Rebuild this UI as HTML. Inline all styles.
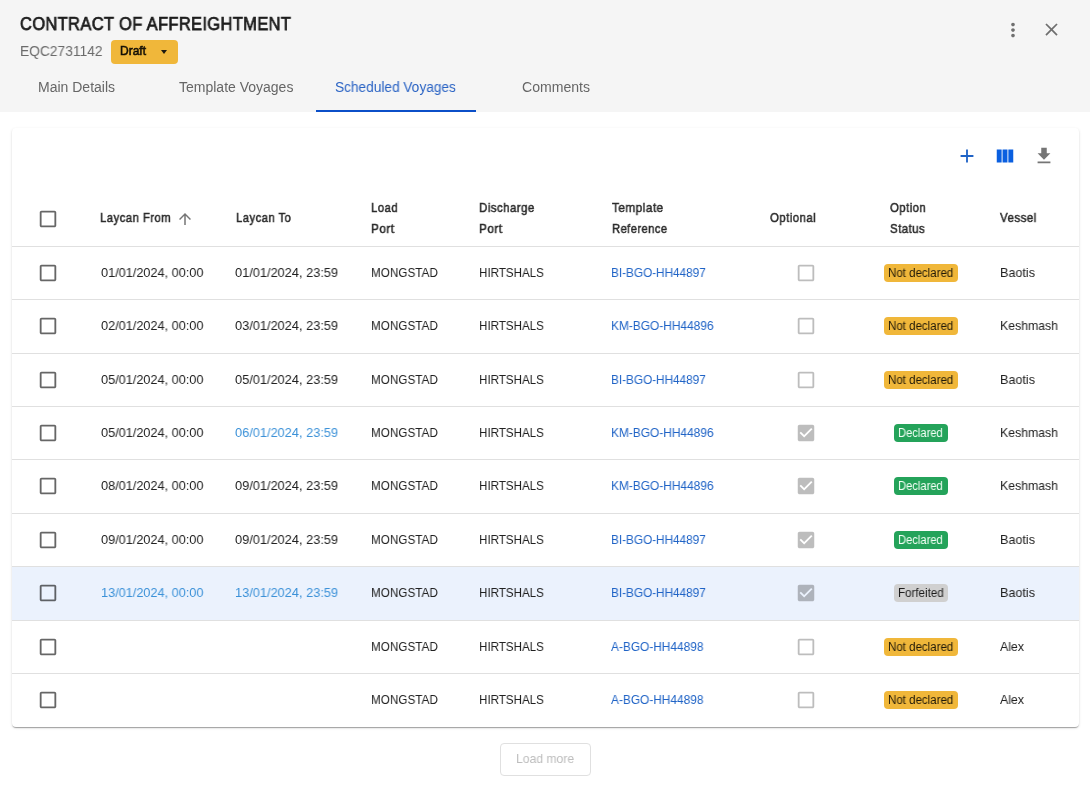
<!DOCTYPE html>
<html><head><meta charset="utf-8"><style>
html,body{margin:0;padding:0;}
body{width:1090px;height:785px;overflow:hidden;background:#fff;position:relative;font-family:"Liberation Sans",sans-serif;}
.t{position:absolute;white-space:nowrap;line-height:20px;transform-origin:0 0;will-change:transform;}
.i{position:absolute;}
.b{position:absolute;}
</style></head><body>
<div class="b" style="left:0;top:0;width:1090px;height:112px;background:#f5f5f5"></div>
<div class="t" style="left:20.48px;top:14.00px;font-size:18px;color:#1c1c1c;-webkit-text-stroke:0.75px #1c1c1c;transform:scaleX(0.9145);letter-spacing:0.4px;">CONTRACT OF AFFREIGHTMENT</div>
<div class="t" style="left:20.10px;top:41.05px;font-size:14px;color:#6b6b6b;transform:scaleX(0.9843);">EQC2731142</div>
<div class="b" style="left:111px;top:40px;width:67px;height:24px;background:#f0b73a;border-radius:4px"></div>
<div class="t" style="left:119.50px;top:40.64px;font-size:12px;color:rgba(0,0,0,0.87);-webkit-text-stroke:0.6px rgba(0,0,0,0.87);transform:scaleX(0.9962);">Draft</div>
<svg class="i" style="left:160px;top:49.4px" width="8" height="6" viewBox="0 0 8 6"><path d="M1 1h6L4 5z" fill="#1d1a10"/></svg>
<svg class="i" style="left:1002px;top:19px" width="22" height="22" viewBox="0 0 24 24"><path fill="#6f6f6f" d="M12 8c1.1 0 2-.9 2-2s-.9-2-2-2-2 .9-2 2 .9 2 2 2m0 2c-1.1 0-2 .9-2 2s.9 2 2 2 2-.9 2-2-.9-2-2-2m0 6c-1.1 0-2 .9-2 2s.9 2 2 2 2-.9 2-2-.9-2-2-2"/></svg>
<svg class="i" style="left:1041px;top:19px" width="21" height="21" viewBox="0 0 24 24"><path fill="#6f6f6f" d="M19 6.41 17.59 5 12 10.59 6.41 5 5 6.41 10.59 12 5 17.59 6.41 19 12 13.41 17.59 19 19 17.59 13.41 12z"/></svg>
<div class="t" style="left:37.50px;top:76.95px;font-size:14px;color:#666666;transform:scaleX(0.9987);">Main Details</div>
<div class="t" style="left:178.80px;top:76.95px;font-size:14px;color:#666666;transform:scaleX(0.9962);">Template Voyages</div>
<div class="t" style="left:335.20px;top:76.95px;font-size:14px;color:#2a63c4;transform:scaleX(0.9762);">Scheduled Voyages</div>
<div class="t" style="left:521.70px;top:77.05px;font-size:14px;color:#666666;transform:scaleX(1.0046);">Comments</div>
<div class="b" style="left:316px;top:110px;width:160px;height:2px;background:#0b4fc8"></div>
<div class="b" style="left:12px;top:128px;width:1067px;height:599px;background:#fff;border-radius:4px;box-shadow:0 2px 1px -1px rgba(0,0,0,.2),0 1px 1px 0 rgba(0,0,0,.14),0 1px 3px 0 rgba(0,0,0,.12)"></div>
<div class="b" style="left:12px;top:128px;width:1067px;height:599px;border-radius:4px;overflow:hidden">
<div class="b" style="left:0;top:118px;width:1067px;height:52px;border-top:1px solid #e0e0e0;"></div>
<div class="b" style="left:0;top:171px;width:1067px;height:53px;border-top:1px solid #e0e0e0;"></div>
<div class="b" style="left:0;top:225px;width:1067px;height:52px;border-top:1px solid #e0e0e0;"></div>
<div class="b" style="left:0;top:278px;width:1067px;height:52px;border-top:1px solid #e0e0e0;"></div>
<div class="b" style="left:0;top:331px;width:1067px;height:53px;border-top:1px solid #e0e0e0;"></div>
<div class="b" style="left:0;top:385px;width:1067px;height:52px;border-top:1px solid #e0e0e0;"></div>
<div class="b" style="left:0;top:438px;width:1067px;height:53px;border-top:1px solid #e0e0e0;background:#ebf2fd;"></div>
<div class="b" style="left:0;top:492px;width:1067px;height:52px;border-top:1px solid #e0e0e0;"></div>
<div class="b" style="left:0;top:545px;width:1067px;height:52px;border-top:1px solid #e0e0e0;"></div>
</div>
<svg class="i" style="left:956px;top:145px" width="22" height="22" viewBox="0 0 24 24"><path fill="#1f63c6" d="M19 13h-6v6h-2v-6H5v-2h6V5h2v6h6v2z"/></svg>
<svg class="i" style="left:994px;top:145px" width="22" height="22" viewBox="0 0 24 24"><path fill="#0a5fe0" d="M14.67 5v14H9.33V5zm1 14H21V5h-5.33zm-7.34 0V5H3v14z"/></svg>
<svg class="i" style="left:1033px;top:145px" width="22" height="22" viewBox="0 0 24 24"><path fill="#757575" d="M19 9h-4V3H9v6H5l7 7 7-7zM5 18v2h14v-2H5z"/></svg>
<svg class="i" style="left:36.90px;top:208.00px" width="22" height="22" viewBox="0 0 24 24"><path fill="rgba(0,0,0,0.6)" d="M19 5v14H5V5h14m0-2H5c-1.11 0-2 .9-2 2v14c0 1.1.89 2 2 2h14c1.1 0 2-.9 2-2V5c0-1.1-.9-2-2-2z"/></svg>
<div class="t" style="left:100.45px;top:208.10px;font-size:13px;color:#2b2b2b;-webkit-text-stroke:0.5px #2b2b2b;transform:scaleX(0.8742);letter-spacing:0.5px;">Laycan From</div>
<svg class="i" style="left:175.7px;top:210px" width="18" height="18" viewBox="0 0 24 24"><path fill="#757575" d="M4 12l1.41 1.41L11 7.83V20h2V7.83l5.58 5.59L20 12l-8-8-8 8z"/></svg>
<div class="t" style="left:235.85px;top:207.80px;font-size:13px;color:#2b2b2b;-webkit-text-stroke:0.5px #2b2b2b;transform:scaleX(0.8706);letter-spacing:0.5px;">Laycan To</div>
<div class="t" style="left:371.35px;top:197.60px;font-size:13px;color:#2b2b2b;-webkit-text-stroke:0.5px #2b2b2b;transform:scaleX(0.8739);letter-spacing:0.5px;">Load</div>
<div class="t" style="left:371.35px;top:218.60px;font-size:13px;color:#2b2b2b;-webkit-text-stroke:0.5px #2b2b2b;transform:scaleX(0.9047);letter-spacing:0.5px;">Port</div>
<div class="t" style="left:479.35px;top:197.60px;font-size:13px;color:#2b2b2b;-webkit-text-stroke:0.5px #2b2b2b;transform:scaleX(0.8848);letter-spacing:0.5px;">Discharge</div>
<div class="t" style="left:479.35px;top:218.60px;font-size:13px;color:#2b2b2b;-webkit-text-stroke:0.5px #2b2b2b;transform:scaleX(0.9047);letter-spacing:0.5px;">Port</div>
<div class="t" style="left:611.85px;top:197.60px;font-size:13px;color:#2b2b2b;-webkit-text-stroke:0.5px #2b2b2b;transform:scaleX(0.9084);letter-spacing:0.5px;">Template</div>
<div class="t" style="left:611.85px;top:218.60px;font-size:13px;color:#2b2b2b;-webkit-text-stroke:0.5px #2b2b2b;transform:scaleX(0.8609);letter-spacing:0.5px;">Reference</div>
<div class="t" style="left:769.75px;top:208.10px;font-size:13px;color:#2b2b2b;-webkit-text-stroke:0.5px #2b2b2b;transform:scaleX(0.8818);letter-spacing:0.5px;">Optional</div>
<div class="t" style="left:889.95px;top:197.60px;font-size:13px;color:#2b2b2b;-webkit-text-stroke:0.5px #2b2b2b;transform:scaleX(0.8772);letter-spacing:0.5px;">Option</div>
<div class="t" style="left:890.35px;top:218.60px;font-size:13px;color:#2b2b2b;-webkit-text-stroke:0.5px #2b2b2b;transform:scaleX(0.8838);letter-spacing:0.5px;">Status</div>
<div class="t" style="left:999.75px;top:208.10px;font-size:13px;color:#2b2b2b;-webkit-text-stroke:0.5px #2b2b2b;transform:scaleX(0.8870);letter-spacing:0.5px;">Vessel</div>
<svg class="i" style="left:37.20px;top:262.10px" width="22" height="22" viewBox="0 0 24 24"><path fill="rgba(0,0,0,0.6)" d="M19 5v14H5V5h14m0-2H5c-1.11 0-2 .9-2 2v14c0 1.1.89 2 2 2h14c1.1 0 2-.9 2-2V5c0-1.1-.9-2-2-2z"/></svg>
<div class="t" style="left:100.50px;top:262.50px;font-size:13px;color:#212121;transform:scaleX(0.9779);">01/01/2024, 00:00</div>
<div class="t" style="left:235.20px;top:262.50px;font-size:13px;color:#212121;transform:scaleX(0.9837);">01/01/2024, 23:59</div>
<div class="t" style="left:371.10px;top:262.50px;font-size:13px;color:#212121;transform:scaleX(0.9025);">MONGSTAD</div>
<div class="t" style="left:479.10px;top:262.50px;font-size:13px;color:#212121;transform:scaleX(0.8921);">HIRTSHALS</div>
<div class="t" style="left:611.30px;top:262.50px;font-size:13px;color:#1f63c6;transform:scaleX(0.9050);">BI-BGO-HH44897</div>
<svg class="i" style="left:795.00px;top:262.10px" width="22" height="22" viewBox="0 0 24 24"><path fill="rgba(0,0,0,0.26)" d="M19 5v14H5V5h14m0-2H5c-1.11 0-2 .9-2 2v14c0 1.1.89 2 2 2h14c1.1 0 2-.9 2-2V5c0-1.1-.9-2-2-2z"/></svg>
<div class="b" style="left:884.4px;top:264.10px;width:73.5px;height:17.5px;background:#f0b73a;border-radius:4px"></div>
<div class="t" style="left:888.10px;top:262.64px;font-size:12px;color:rgba(0,0,0,0.87);transform:scaleX(0.9594);">Not declared</div>
<div class="t" style="left:999.50px;top:262.50px;font-size:13px;color:#212121;transform:scaleX(0.9661);">Baotis</div>
<svg class="i" style="left:37.20px;top:315.10px" width="22" height="22" viewBox="0 0 24 24"><path fill="rgba(0,0,0,0.6)" d="M19 5v14H5V5h14m0-2H5c-1.11 0-2 .9-2 2v14c0 1.1.89 2 2 2h14c1.1 0 2-.9 2-2V5c0-1.1-.9-2-2-2z"/></svg>
<div class="t" style="left:100.50px;top:315.50px;font-size:13px;color:#212121;transform:scaleX(0.9779);">02/01/2024, 00:00</div>
<div class="t" style="left:235.20px;top:315.50px;font-size:13px;color:#212121;transform:scaleX(0.9837);">03/01/2024, 23:59</div>
<div class="t" style="left:371.10px;top:315.50px;font-size:13px;color:#212121;transform:scaleX(0.9025);">MONGSTAD</div>
<div class="t" style="left:479.10px;top:315.50px;font-size:13px;color:#212121;transform:scaleX(0.8921);">HIRTSHALS</div>
<div class="t" style="left:611.30px;top:315.50px;font-size:13px;color:#1f63c6;transform:scaleX(0.9161);">KM-BGO-HH44896</div>
<svg class="i" style="left:795.00px;top:315.10px" width="22" height="22" viewBox="0 0 24 24"><path fill="rgba(0,0,0,0.26)" d="M19 5v14H5V5h14m0-2H5c-1.11 0-2 .9-2 2v14c0 1.1.89 2 2 2h14c1.1 0 2-.9 2-2V5c0-1.1-.9-2-2-2z"/></svg>
<div class="b" style="left:884.4px;top:317.10px;width:73.5px;height:17.5px;background:#f0b73a;border-radius:4px"></div>
<div class="t" style="left:888.10px;top:315.64px;font-size:12px;color:rgba(0,0,0,0.87);transform:scaleX(0.9594);">Not declared</div>
<div class="t" style="left:999.50px;top:315.50px;font-size:13px;color:#212121;transform:scaleX(0.9424);">Keshmash</div>
<svg class="i" style="left:37.20px;top:369.10px" width="22" height="22" viewBox="0 0 24 24"><path fill="rgba(0,0,0,0.6)" d="M19 5v14H5V5h14m0-2H5c-1.11 0-2 .9-2 2v14c0 1.1.89 2 2 2h14c1.1 0 2-.9 2-2V5c0-1.1-.9-2-2-2z"/></svg>
<div class="t" style="left:100.50px;top:369.50px;font-size:13px;color:#212121;transform:scaleX(0.9779);">05/01/2024, 00:00</div>
<div class="t" style="left:235.20px;top:369.50px;font-size:13px;color:#212121;transform:scaleX(0.9837);">05/01/2024, 23:59</div>
<div class="t" style="left:371.10px;top:369.50px;font-size:13px;color:#212121;transform:scaleX(0.9025);">MONGSTAD</div>
<div class="t" style="left:479.10px;top:369.50px;font-size:13px;color:#212121;transform:scaleX(0.8921);">HIRTSHALS</div>
<div class="t" style="left:611.30px;top:369.50px;font-size:13px;color:#1f63c6;transform:scaleX(0.9050);">BI-BGO-HH44897</div>
<svg class="i" style="left:795.00px;top:369.10px" width="22" height="22" viewBox="0 0 24 24"><path fill="rgba(0,0,0,0.26)" d="M19 5v14H5V5h14m0-2H5c-1.11 0-2 .9-2 2v14c0 1.1.89 2 2 2h14c1.1 0 2-.9 2-2V5c0-1.1-.9-2-2-2z"/></svg>
<div class="b" style="left:884.4px;top:371.10px;width:73.5px;height:17.5px;background:#f0b73a;border-radius:4px"></div>
<div class="t" style="left:888.10px;top:369.64px;font-size:12px;color:rgba(0,0,0,0.87);transform:scaleX(0.9594);">Not declared</div>
<div class="t" style="left:999.50px;top:369.50px;font-size:13px;color:#212121;transform:scaleX(0.9661);">Baotis</div>
<svg class="i" style="left:37.20px;top:422.10px" width="22" height="22" viewBox="0 0 24 24"><path fill="rgba(0,0,0,0.6)" d="M19 5v14H5V5h14m0-2H5c-1.11 0-2 .9-2 2v14c0 1.1.89 2 2 2h14c1.1 0 2-.9 2-2V5c0-1.1-.9-2-2-2z"/></svg>
<div class="t" style="left:100.50px;top:422.50px;font-size:13px;color:#212121;transform:scaleX(0.9779);">05/01/2024, 00:00</div>
<div class="t" style="left:235.20px;top:422.50px;font-size:13px;color:#3b91d8;transform:scaleX(0.9837);">06/01/2024, 23:59</div>
<div class="t" style="left:371.10px;top:422.50px;font-size:13px;color:#212121;transform:scaleX(0.9025);">MONGSTAD</div>
<div class="t" style="left:479.10px;top:422.50px;font-size:13px;color:#212121;transform:scaleX(0.8921);">HIRTSHALS</div>
<div class="t" style="left:611.30px;top:422.50px;font-size:13px;color:#1f63c6;transform:scaleX(0.9161);">KM-BGO-HH44896</div>
<svg class="i" style="left:795.00px;top:422.10px" width="22" height="22" viewBox="0 0 24 24"><path fill="rgba(0,0,0,0.26)" d="M19 3H5c-1.11 0-2 .9-2 2v14c0 1.1.89 2 2 2h14c1.1 0 2-.9 2-2V5c0-1.1-.9-2-2-2zm-9 14l-5-5 1.41-1.41L10 14.17l7.59-7.59L19 8l-9 9z"/></svg>
<div class="b" style="left:894px;top:424.10px;width:54px;height:17.6px;background:#24a35a;border-radius:4px"></div>
<div class="t" style="left:898.40px;top:422.64px;font-size:12px;color:#f4fff6;transform:scaleX(0.9313);">Declared</div>
<div class="t" style="left:999.50px;top:422.50px;font-size:13px;color:#212121;transform:scaleX(0.9424);">Keshmash</div>
<svg class="i" style="left:37.20px;top:475.10px" width="22" height="22" viewBox="0 0 24 24"><path fill="rgba(0,0,0,0.6)" d="M19 5v14H5V5h14m0-2H5c-1.11 0-2 .9-2 2v14c0 1.1.89 2 2 2h14c1.1 0 2-.9 2-2V5c0-1.1-.9-2-2-2z"/></svg>
<div class="t" style="left:100.50px;top:475.50px;font-size:13px;color:#212121;transform:scaleX(0.9779);">08/01/2024, 00:00</div>
<div class="t" style="left:235.20px;top:475.50px;font-size:13px;color:#212121;transform:scaleX(0.9837);">09/01/2024, 23:59</div>
<div class="t" style="left:371.10px;top:475.50px;font-size:13px;color:#212121;transform:scaleX(0.9025);">MONGSTAD</div>
<div class="t" style="left:479.10px;top:475.50px;font-size:13px;color:#212121;transform:scaleX(0.8921);">HIRTSHALS</div>
<div class="t" style="left:611.30px;top:475.50px;font-size:13px;color:#1f63c6;transform:scaleX(0.9161);">KM-BGO-HH44896</div>
<svg class="i" style="left:795.00px;top:475.10px" width="22" height="22" viewBox="0 0 24 24"><path fill="rgba(0,0,0,0.26)" d="M19 3H5c-1.11 0-2 .9-2 2v14c0 1.1.89 2 2 2h14c1.1 0 2-.9 2-2V5c0-1.1-.9-2-2-2zm-9 14l-5-5 1.41-1.41L10 14.17l7.59-7.59L19 8l-9 9z"/></svg>
<div class="b" style="left:894px;top:477.10px;width:54px;height:17.6px;background:#24a35a;border-radius:4px"></div>
<div class="t" style="left:898.40px;top:475.64px;font-size:12px;color:#f4fff6;transform:scaleX(0.9313);">Declared</div>
<div class="t" style="left:999.50px;top:475.50px;font-size:13px;color:#212121;transform:scaleX(0.9424);">Keshmash</div>
<svg class="i" style="left:37.20px;top:529.10px" width="22" height="22" viewBox="0 0 24 24"><path fill="rgba(0,0,0,0.6)" d="M19 5v14H5V5h14m0-2H5c-1.11 0-2 .9-2 2v14c0 1.1.89 2 2 2h14c1.1 0 2-.9 2-2V5c0-1.1-.9-2-2-2z"/></svg>
<div class="t" style="left:100.50px;top:529.50px;font-size:13px;color:#212121;transform:scaleX(0.9779);">09/01/2024, 00:00</div>
<div class="t" style="left:235.20px;top:529.50px;font-size:13px;color:#212121;transform:scaleX(0.9837);">09/01/2024, 23:59</div>
<div class="t" style="left:371.10px;top:529.50px;font-size:13px;color:#212121;transform:scaleX(0.9025);">MONGSTAD</div>
<div class="t" style="left:479.10px;top:529.50px;font-size:13px;color:#212121;transform:scaleX(0.8921);">HIRTSHALS</div>
<div class="t" style="left:611.30px;top:529.50px;font-size:13px;color:#1f63c6;transform:scaleX(0.9050);">BI-BGO-HH44897</div>
<svg class="i" style="left:795.00px;top:529.10px" width="22" height="22" viewBox="0 0 24 24"><path fill="rgba(0,0,0,0.26)" d="M19 3H5c-1.11 0-2 .9-2 2v14c0 1.1.89 2 2 2h14c1.1 0 2-.9 2-2V5c0-1.1-.9-2-2-2zm-9 14l-5-5 1.41-1.41L10 14.17l7.59-7.59L19 8l-9 9z"/></svg>
<div class="b" style="left:894px;top:531.10px;width:54px;height:17.6px;background:#24a35a;border-radius:4px"></div>
<div class="t" style="left:898.40px;top:529.64px;font-size:12px;color:#f4fff6;transform:scaleX(0.9313);">Declared</div>
<div class="t" style="left:999.50px;top:529.50px;font-size:13px;color:#212121;transform:scaleX(0.9661);">Baotis</div>
<svg class="i" style="left:37.20px;top:582.10px" width="22" height="22" viewBox="0 0 24 24"><path fill="rgba(0,0,0,0.6)" d="M19 5v14H5V5h14m0-2H5c-1.11 0-2 .9-2 2v14c0 1.1.89 2 2 2h14c1.1 0 2-.9 2-2V5c0-1.1-.9-2-2-2z"/></svg>
<div class="t" style="left:100.50px;top:582.50px;font-size:13px;color:#3b91d8;transform:scaleX(0.9779);">13/01/2024, 00:00</div>
<div class="t" style="left:235.20px;top:582.50px;font-size:13px;color:#3b91d8;transform:scaleX(0.9837);">13/01/2024, 23:59</div>
<div class="t" style="left:371.10px;top:582.50px;font-size:13px;color:#212121;transform:scaleX(0.9025);">MONGSTAD</div>
<div class="t" style="left:479.10px;top:582.50px;font-size:13px;color:#212121;transform:scaleX(0.8921);">HIRTSHALS</div>
<div class="t" style="left:611.30px;top:582.50px;font-size:13px;color:#1f63c6;transform:scaleX(0.9050);">BI-BGO-HH44897</div>
<svg class="i" style="left:795.00px;top:582.10px" width="22" height="22" viewBox="0 0 24 24"><path fill="rgba(0,0,0,0.26)" d="M19 3H5c-1.11 0-2 .9-2 2v14c0 1.1.89 2 2 2h14c1.1 0 2-.9 2-2V5c0-1.1-.9-2-2-2zm-9 14l-5-5 1.41-1.41L10 14.17l7.59-7.59L19 8l-9 9z"/></svg>
<div class="b" style="left:894px;top:584.10px;width:54px;height:17.6px;background:#d0d0d0;border-radius:4px"></div>
<div class="t" style="left:898.30px;top:582.64px;font-size:12px;color:rgba(0,0,0,0.87);transform:scaleX(0.9646);">Forfeited</div>
<div class="t" style="left:999.50px;top:582.50px;font-size:13px;color:#212121;transform:scaleX(0.9661);">Baotis</div>
<svg class="i" style="left:37.20px;top:636.10px" width="22" height="22" viewBox="0 0 24 24"><path fill="rgba(0,0,0,0.6)" d="M19 5v14H5V5h14m0-2H5c-1.11 0-2 .9-2 2v14c0 1.1.89 2 2 2h14c1.1 0 2-.9 2-2V5c0-1.1-.9-2-2-2z"/></svg>
<div class="t" style="left:371.10px;top:636.50px;font-size:13px;color:#212121;transform:scaleX(0.9025);">MONGSTAD</div>
<div class="t" style="left:479.10px;top:636.50px;font-size:13px;color:#212121;transform:scaleX(0.8921);">HIRTSHALS</div>
<div class="t" style="left:611.30px;top:636.50px;font-size:13px;color:#1f63c6;transform:scaleX(0.9137);">A-BGO-HH44898</div>
<svg class="i" style="left:795.00px;top:636.10px" width="22" height="22" viewBox="0 0 24 24"><path fill="rgba(0,0,0,0.26)" d="M19 5v14H5V5h14m0-2H5c-1.11 0-2 .9-2 2v14c0 1.1.89 2 2 2h14c1.1 0 2-.9 2-2V5c0-1.1-.9-2-2-2z"/></svg>
<div class="b" style="left:884.4px;top:638.10px;width:73.5px;height:17.5px;background:#f0b73a;border-radius:4px"></div>
<div class="t" style="left:888.10px;top:636.64px;font-size:12px;color:rgba(0,0,0,0.87);transform:scaleX(0.9594);">Not declared</div>
<div class="t" style="left:999.50px;top:636.50px;font-size:13px;color:#212121;transform:scaleX(0.9481);">Alex</div>
<svg class="i" style="left:37.20px;top:689.10px" width="22" height="22" viewBox="0 0 24 24"><path fill="rgba(0,0,0,0.6)" d="M19 5v14H5V5h14m0-2H5c-1.11 0-2 .9-2 2v14c0 1.1.89 2 2 2h14c1.1 0 2-.9 2-2V5c0-1.1-.9-2-2-2z"/></svg>
<div class="t" style="left:371.10px;top:689.50px;font-size:13px;color:#212121;transform:scaleX(0.9025);">MONGSTAD</div>
<div class="t" style="left:479.10px;top:689.50px;font-size:13px;color:#212121;transform:scaleX(0.8921);">HIRTSHALS</div>
<div class="t" style="left:611.30px;top:689.50px;font-size:13px;color:#1f63c6;transform:scaleX(0.9137);">A-BGO-HH44898</div>
<svg class="i" style="left:795.00px;top:689.10px" width="22" height="22" viewBox="0 0 24 24"><path fill="rgba(0,0,0,0.26)" d="M19 5v14H5V5h14m0-2H5c-1.11 0-2 .9-2 2v14c0 1.1.89 2 2 2h14c1.1 0 2-.9 2-2V5c0-1.1-.9-2-2-2z"/></svg>
<div class="b" style="left:884.4px;top:691.10px;width:73.5px;height:17.5px;background:#f0b73a;border-radius:4px"></div>
<div class="t" style="left:888.10px;top:689.64px;font-size:12px;color:rgba(0,0,0,0.87);transform:scaleX(0.9594);">Not declared</div>
<div class="t" style="left:999.50px;top:689.50px;font-size:13px;color:#212121;transform:scaleX(0.9481);">Alex</div>
<div class="b" style="left:500px;top:743px;width:89px;height:31px;border:1px solid #e0e0e0;border-radius:4px"></div>
<div class="t" style="left:516.20px;top:748.70px;font-size:13px;color:#bdbdbd;transform:scaleX(0.9352);">Load more</div>
</body></html>
